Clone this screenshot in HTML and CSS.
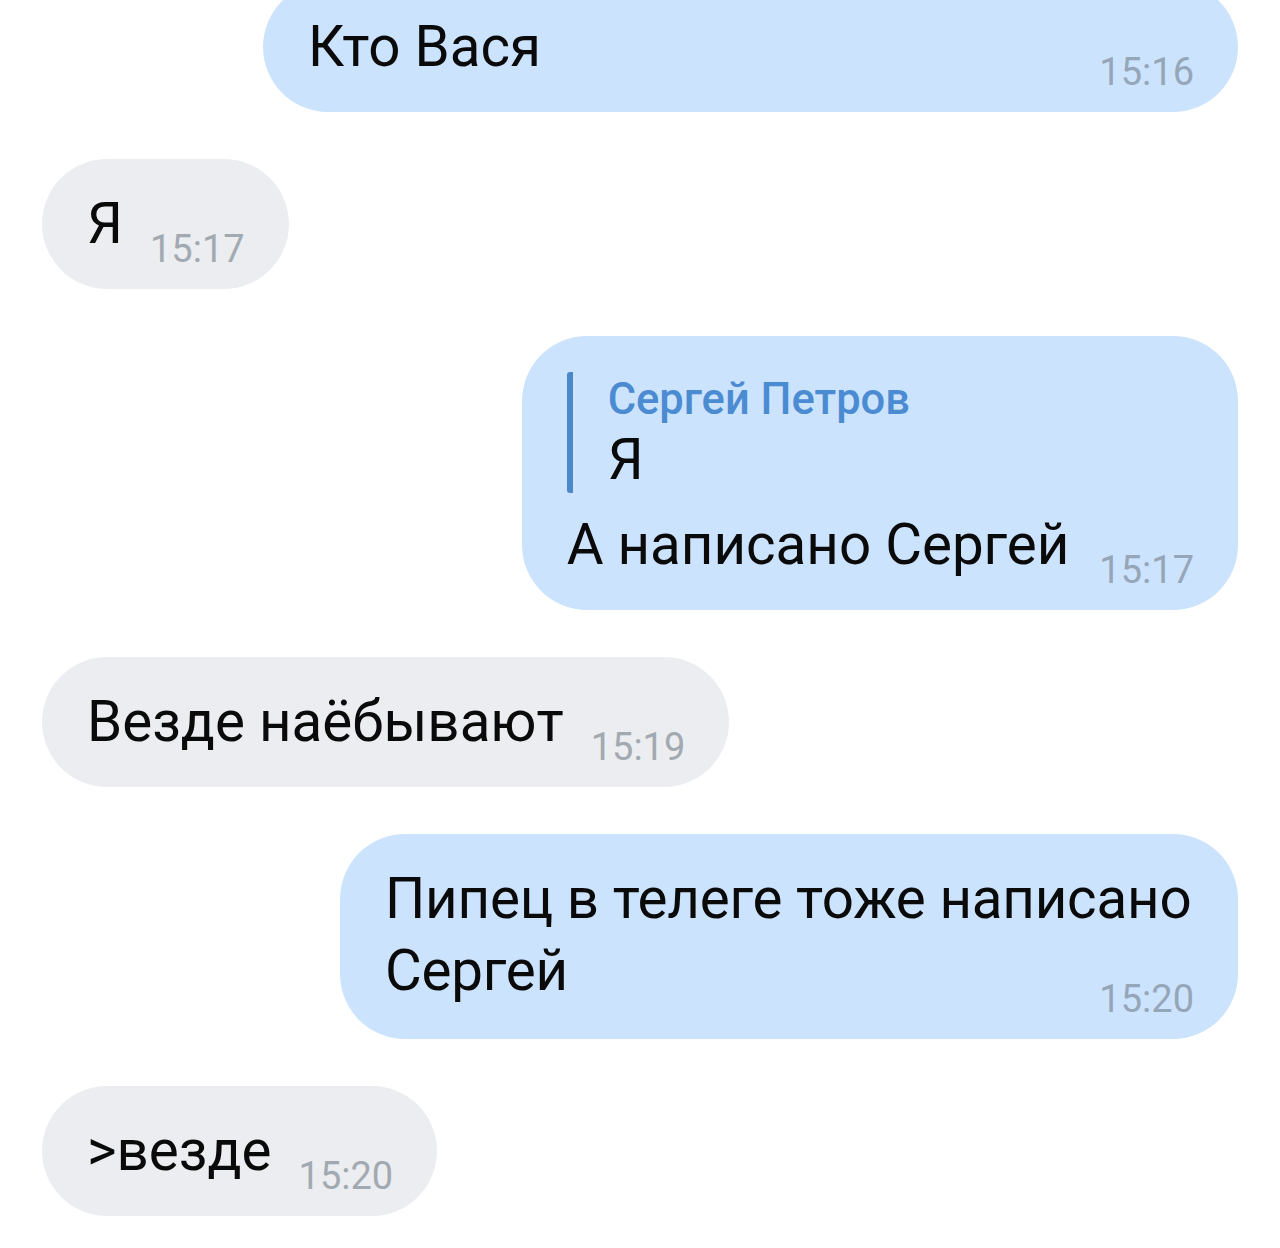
FILE: index.html
```html
<!DOCTYPE html>
<html lang="ru">
<head>
    <meta charset="UTF-8">
    <meta name="viewport" content="width=device-width, initial-scale=1.0">
    <title>Чат</title>
    <link rel="stylesheet" href="styles.css">
</head>
<body>
    <div class="chat">
        <div class="bubble out first">
            <div class="row">
                <span class="text">Кто Вася</span>
                <span class="time">15:16</span>
            </div>
        </div>

        <div class="bubble in">
            <div class="row">
                <span class="text">Я</span>
                <span class="time">15:17</span>
            </div>
        </div>

        <div class="bubble out reply-bubble">
            <div class="reply">
                <div class="reply-name">Сергей Петров</div>
                <div class="reply-text">Я</div>
            </div>
            <div class="row">
                <span class="text">А написано Сергей</span>
                <span class="time">15:17</span>
            </div>
        </div>

        <div class="bubble in">
            <div class="row">
                <span class="text">Везде наёбывают</span>
                <span class="time">15:19</span>
            </div>
        </div>

        <div class="bubble out multi">
            <div class="row">
                <span class="text">Пипец в телеге тоже написано<br>Сергей</span><span class="time">15:20</span>
            </div>
        </div>

        <div class="bubble in">
            <div class="row">
                <span class="text">&gt;везде</span>
                <span class="time">15:20</span>
            </div>
        </div>
    </div>
</body>
</html>
```

FILE: styles.css
```css
*{
    margin: 0px;
    padding: 0px;
    box-sizing: border-box;
}
html, body{
    background: #ffffff;
    overflow: hidden;
}
body{
    font-family: Roboto, "Noto Sans", sans-serif;
    color: #0a0a0a;
}
.chat{
    display: flex;
    flex-direction: column;
    align-items: flex-start;
    gap: 47px;
    padding: 0px 42px;
}

/* bolhas */
.bubble{
    border-radius: 65px;
    padding: 29px 44px 21px 45px;
    background: #ebedf0;
}
.bubble.out{
    align-self: flex-end;
    background: #cce3fd;
}
.bubble.first{
    margin-top: -18px;
    width: 975px;
}
.row{
    display: flex;
    align-items: flex-end;
    justify-content: space-between;
    gap: 27px;
}
.text{
    font-size: 56.5px;
    line-height: 72px;
    margin-bottom: 8px;
}
.time{
    font-size: 38px;
    line-height: 38px;
    color: #a2a9b1;
    white-space: nowrap;
}
.out .time{
    color: #95a6b8;
}

/* resposta */
.reply-bubble{
    padding-top: 36px;
}
.reply-bubble .row{
    gap: 30px;
}
.reply{
    border-left: 6px solid #4a87cb;
    border-radius: 3px;
    padding-left: 35px;
    margin-bottom: 16px;
}
.reply-name{
    font-size: 43.5px;
    font-weight: 500;
    line-height: 56px;
    color: #4b8bd2;
}
.reply-text{
    font-size: 56.5px;
    line-height: 65px;
}

/* mensagem com duas linhas */
.multi{
    width: 898px;
}
.multi .row{
    display: flow-root;
}
.multi .text{
    margin-bottom: 0px;
    white-space: nowrap;
    letter-spacing: -0.2px;
}
.multi .time{
    float: right;
    margin-top: 45px;
}
```
